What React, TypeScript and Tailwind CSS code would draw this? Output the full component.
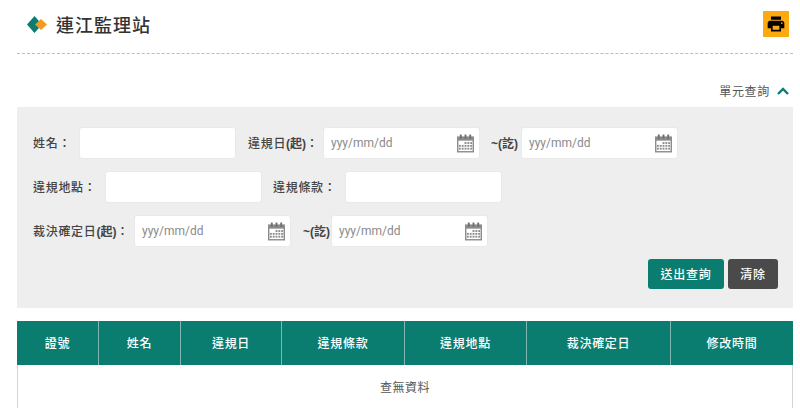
import React from 'react';
import { MdPrint } from 'react-icons/md';

const font = '[font-family:"Noto_Sans_CJK_TC","Liberation_Sans",sans-serif]';

const CalendarIcon = () => (
  <svg width="17" height="19" viewBox="0 0 18 19" className="shrink-0">
    <rect x="0" y="2" width="18" height="17" fill="#8c8c8c" />
    <rect x="1.5" y="6.5" width="15" height="11" fill="#fff" />
    <rect x="3" y="0" width="2" height="4.5" fill="#6f6f6f" />
    <rect x="8" y="0" width="2" height="4.5" fill="#6f6f6f" />
    <rect x="13" y="0" width="2" height="4.5" fill="#6f6f6f" />
    <g fill="#8c8c8c">
      <rect x="8" y="8" width="2" height="2" />
      <rect x="11" y="8" width="2" height="2" />
      <rect x="14" y="8" width="2" height="2" />
      <rect x="2" y="11" width="2" height="2" />
      <rect x="5" y="11" width="2" height="2" />
      <rect x="8" y="11" width="2" height="2" />
      <rect x="11" y="11" width="2" height="2" />
      <rect x="14" y="11" width="2" height="2" />
      <rect x="2" y="14" width="2" height="2" />
      <rect x="5" y="14" width="2" height="2" />
      <rect x="8" y="14" width="2" height="2" />
      <rect x="11" y="14" width="2" height="2" />
      <rect x="14" y="14" width="2" height="2" />
    </g>
  </svg>
);

const TextInput = () => (
  <div className="h-8 w-[157px] shrink-0 rounded-[3px] border border-[#e9e9e9] bg-white" />
);

const DateInput = () => (
  <div className="flex h-8 w-[157px] shrink-0 items-center justify-between rounded-[3px] border border-[#e9e9e9] bg-white pl-[7px] pr-[5px]">
    <span className="font-['Roboto',sans-serif] text-[12px] text-[#8a8a8a]">yyy/mm/dd</span>
    <CalendarIcon />
  </div>
);

const Label = ({ children, className = '' }: { children: React.ReactNode; className?: string }) => (
  <span className={`shrink-0 whitespace-nowrap text-[12px] font-medium tracking-[0.7px] text-[#444] ${className}`}>{children}</span>
);

const Bold = ({ children }: { children: React.ReactNode }) => (
  <span className="font-bold tracking-normal [font-family:'Liberation_Sans','Noto_Sans_CJK_TC',sans-serif]">{children}</span>
);

const columns = [
  { title: '證號', width: 'w-[82px]' },
  { title: '姓名', width: 'w-[82px]' },
  { title: '違規日', width: 'w-[101px]' },
  { title: '違規條款', width: 'w-[123px]' },
  { title: '違規地點', width: 'w-[122px]' },
  { title: '裁決確定日', width: 'w-[144px]' },
  { title: '修改時間', width: 'w-[122px]' },
];

export default function App() {
  return (
    <div className={`h-[408px] w-[800px] overflow-hidden bg-white pl-[17px] pr-[7px] ${font}`}>
      <div className="flex h-[54px] items-start justify-between border-b border-dashed border-[#bdbdbd] pl-[10px] pr-1">
        <div className="flex items-center gap-[9px] pt-[10px]">
          <svg width="20" height="17" viewBox="0 0 20 17">
            <polygon points="0,8.5 7.5,0 15,8.5 7.5,17" fill="#0b7d70" />
            <polygon points="8,8.5 14,3 20,8.5 14,14" fill="#f39a1e" />
          </svg>
          <h1 className="text-[18px] font-medium leading-[28px] tracking-[1px] text-[#333]">連江監理站</h1>
        </div>
        <button className="mt-[11px] flex h-[26px] w-[26px] items-center justify-center bg-[#fdaa12] text-[20px] text-black">
          <MdPrint />
        </button>
      </div>

      <div className="flex h-[53px] items-center justify-end gap-[7px] pr-1 pt-[20px] text-[12px] tracking-[0.7px] text-[#555]">
        <span>單元查詢</span>
        <svg width="12" height="8" viewBox="0 0 12 8" fill="none" stroke="#0b7d70" strokeWidth="2.4">
          <path d="M1 7 6 2l5 5" />
        </svg>
      </div>

      <div className="flex h-[201px] flex-col bg-[#eeeeee] pl-4 pr-[15px] pt-5">
        <div className="flex h-8 items-center">
          <Label className="w-[46px]">姓名：</Label>
          <TextInput />
          <Label className="ml-3 w-[75px]">違規日<Bold>(起)</Bold>：</Label>
          <DateInput />
          <Label className="ml-[11px] w-[30px]"><Bold>~(訖)</Bold></Label>
          <DateInput />
        </div>
        <div className="mt-3 flex h-8 items-center">
          <Label className="w-[72px]">違規地點：</Label>
          <TextInput />
          <Label className="ml-[11px] w-[72px]">違規條款：</Label>
          <TextInput />
        </div>
        <div className="mt-3 flex h-8 items-center">
          <Label className="w-[101px]">裁決確定日<Bold>(起)</Bold>：</Label>
          <DateInput />
          <Label className="ml-3 w-[28px]"><Bold>~(訖)</Bold></Label>
          <DateInput />
        </div>
        <div className="mt-3 flex justify-end gap-1">
          <button className="h-[30px] w-[76px] rounded-[3px] bg-[#0b7d70] text-[12px] font-medium tracking-[0.8px] text-white">送出查詢</button>
          <button className="h-[30px] w-[50px] rounded-[3px] bg-[#4a4a4a] text-[12px] font-medium tracking-[0.8px] text-white">清除</button>
        </div>
      </div>

      <div className="mt-[13px] border-x border-[#d5d5d5]">
        <div className="-mx-px flex h-[44px] bg-[#0b7d70]">
          {columns.map((col) => (
            <div
              key={col.title}
              className={`flex items-center justify-center border-r border-[#7fb8b0] text-[12px] font-medium tracking-[0.7px] text-white last:border-r-0 ${col.width}`}
            >
              {col.title}
            </div>
          ))}
        </div>
        <div className="flex h-[43px] items-center justify-center text-[12px] tracking-[0.5px] text-[#555]">查無資料</div>
      </div>
    </div>
  );
}
